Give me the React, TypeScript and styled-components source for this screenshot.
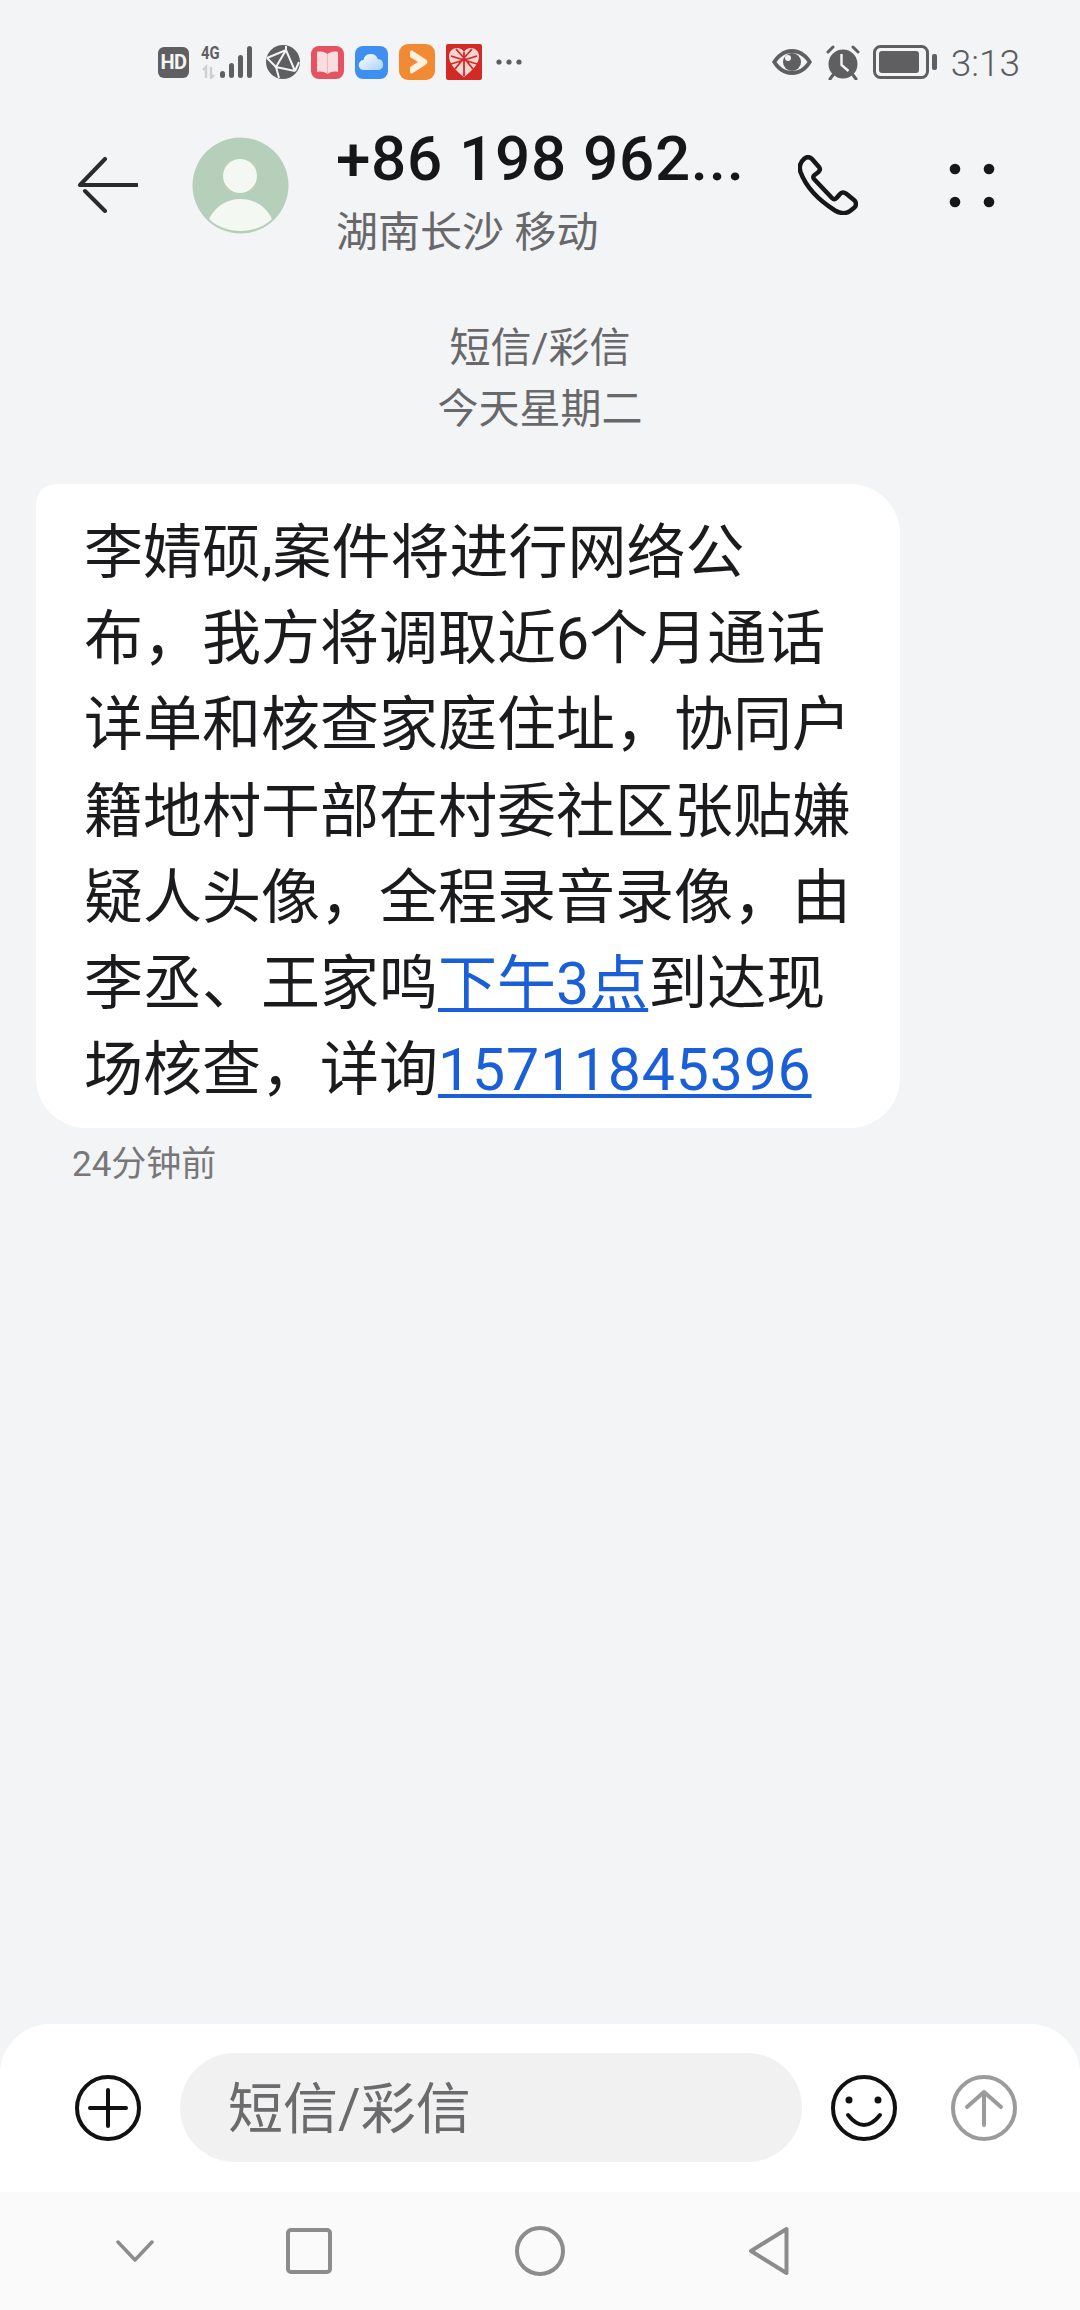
import React from "react";
import styled, { createGlobalStyle } from "styled-components";

const Global = createGlobalStyle`
  html, body { margin: 0; padding: 0; background: #f3f4f6; }
  * { box-sizing: border-box; }
`;

const FONT = `Roboto, "Noto Sans CJK SC", "Noto Sans", sans-serif`;

const Page = styled.div`
  width: 1080px;
  height: 2310px;
  display: flex;
  flex-direction: column;
  background: #f3f4f6;
  font-family: ${FONT};
  overflow: hidden;
`;

const StatusBar = styled.div`
  height: 100px;
  flex: none;
  display: flex;
  align-items: center;
  justify-content: space-between;
  padding: 24px 60px 0 158px;
  color: #5f5f62;
`;
const StatusGroup = styled.div<{ $gap: number }>`
  display: flex;
  align-items: center;
  gap: ${(p) => p.$gap}px;
`;
const HdBadge = styled.span`
  width: 31px;
  height: 31px;
  border-radius: 6px;
  background: #5f5f62;
  color: #f3f4f6;
  font-size: 20px;
  font-weight: 700;
  line-height: 31px;
  text-align: center;
  letter-spacing: -0.5px;
`;
const Signal = styled.div`
  position: relative;
  width: 55px;
  height: 34px;
`;
const NetLabel = styled.span`
  position: absolute;
  left: 1px;
  top: -2px;
  font-size: 19px;
  font-weight: 700;
  line-height: 20px;
  color: #5f5f62;
  transform: scaleX(0.78);
  transform-origin: left;
`;
const Dots = styled.svg`
  margin-left: 3px;
`;
const Clock = styled.span`
  font-size: 37px;
  font-weight: 300;
  line-height: 40px;
  color: #5c5c60;
  margin: 3px 0 0 3px;
`;

const Header = styled.header`
  height: 170px;
  flex: none;
  display: flex;
  align-items: center;
  padding: 0 0 0 78px;
`;
const Avatar = styled.svg`
  display: block;
  flex: none;
  margin-left: 54px;
`;
const TitleBlock = styled.div`
  margin-left: 47px;
  width: 462px;
  flex: none;
  display: flex;
  flex-direction: column;
  margin-top: 10px;
`;
const Name = styled.div`
  font-size: 62px;
  font-weight: 500;
  line-height: 72px;
  color: #17171a;
  letter-spacing: 0.7px;
  white-space: nowrap;
`;
const Region = styled.div`
  font-size: 42px;
  line-height: 50px;
  color: #68686b;
  white-space: nowrap;
  margin-top: 13px;
`;
const HeaderIcon = styled.svg<{ $ml?: number }>`
  display: block;
  flex: none;
  margin-left: ${(p) => p.$ml ?? 0}px;
`;

const Notice = styled.div`
  flex: none;
  display: flex;
  flex-direction: column;
  align-items: center;
  color: #68686b;
  font-size: 41px;
  line-height: 61px;
  margin-top: 48px;
`;

const Thread = styled.main`
  flex: 1;
  padding: 44px 0 0 36px;
`;
const Bubble = styled.div`
  width: 864px;
  background: #fff;
  border-radius: 20px 50px 50px 50px;
  padding: 26px 0 15px 48px;
  font-size: 59px;
  line-height: 86.2px;
  color: #1b1b1d;
`;
const Line = styled.span`
  display: block;
  white-space: nowrap;
`;
const Link = styled.span<{ $spaced?: boolean }>`
  color: #1a5fd8;
  text-decoration: underline;
  text-decoration-thickness: 4px;
  text-underline-offset: 4px;
  text-decoration-skip-ink: none;
  letter-spacing: ${(p) => (p.$spaced ? "0.8px" : "0")};
`;
const Stamp = styled.div`
  margin: 17px 0 0 36px;
  font-size: 35px;
  line-height: 40px;
  color: #77777a;
`;

const Composer = styled.div`
  height: 168px;
  flex: none;
  background: #fff;
  border-radius: 50px 50px 0 0;
  display: flex;
  align-items: flex-start;
  padding: 29px 0 0 75px;
`;
const RoundIcon = styled.svg<{ $ml?: number }>`
  display: block;
  flex: none;
  margin-top: 22px;
  margin-left: ${(p) => p.$ml ?? 0}px;
`;
const Input = styled.div`
  width: 622px;
  height: 109px;
  border-radius: 55px;
  background: #f1f1f2;
  margin: 0 29px 0 39px;
  padding-left: 48px;
  font-size: 55px;
  line-height: 112px;
  color: #6b6b6e;
  flex: none;
`;
const NavBar = styled.nav`
  height: 118px;
  flex: none;
  background: #fafafa;
  display: flex;
  align-items: center;
  gap: 183px;
  padding: 0 0 0 116px;
`;
const NavIcon = styled.svg<{ $mr?: number }>`
  display: block;
  flex: none;
  margin-right: ${(p) => p.$mr ?? 0}px;
`;

export default function App() {
  return (
    <Page>
      <Global />
      <StatusBar>
        <StatusGroup $gap={11}>
          <HdBadge>HD</HdBadge>
          <Signal>
            <NetLabel>4G</NetLabel>
            <svg width="55" height="34" viewBox="0 0 55 34">
              <path d="M3 25l3-3v11M11 22v11l3-3" stroke="#cfcfd2" strokeWidth="2.4" fill="none" />
              <g fill="#5f5f62">
                <rect x="20" y="26" width="5" height="7" rx="2.5" />
                <rect x="29" y="18" width="5" height="15" rx="2.5" />
                <rect x="38" y="10" width="5" height="23" rx="2.5" />
                <rect x="47" y="1" width="5" height="32" rx="2.5" />
              </g>
            </svg>
          </Signal>
          <svg width="34" height="34" viewBox="0 0 34 34">
            <circle cx="17" cy="17" r="17" fill="#5f5f62" />
            <path d="M1 13 L20 5 L29 26 M20 5 L10 22 L29 26 M10 22 L13 33 M1 13 L10 22 M20 1 L20 5 M29 26 L33 17" stroke="#f3f4f6" strokeWidth="2" fill="none" />
          </svg>
          <svg width="33" height="33" viewBox="0 0 33 33">
            <rect width="33" height="33" rx="8" fill="#e4535f" />
            <path d="M6 6c4-1 8 0 10.500 2C19 6 23 5 27 6v20c-4-1-8 0-10.500 2C14 26 10 25 6 26z" fill="#fbdde0" />
            <path d="M16.500 8v20" stroke="#f3b4ba" strokeWidth="1" />
          </svg>
          <svg width="33" height="33" viewBox="0 0 33 33">
            <defs>
              <linearGradient id="cl" x1="0" y1="0" x2="1" y2="1">
                <stop offset="0" stopColor="#ffffff" />
                <stop offset="1" stopColor="#a9d2f7" />
              </linearGradient>
            </defs>
            <rect width="33" height="33" rx="8" fill="#3f8ff0" />
            <path d="M9 24a5 5 0 0 1-.6-10 7.500 7.500 0 0 1 14.400-1 5.600 5.600 0 0 1 1.200 11z" fill="url(#cl)" />
          </svg>
          <svg width="36" height="36" viewBox="0 0 36 36">
            <rect width="36" height="36" rx="9" fill="#f28a33" />
            <path d="M11 8c0-1.500 1.500-2 2.500-1.300L27 15.500c2 1.300 2 3.700 0 5L13.500 29.300C12.500 30 11 29.500 11 28v-5l8-5-8-5z" fill="#fff0e0" />
          </svg>
          <svg width="36" height="36" viewBox="0 0 36 36">
            <rect width="36" height="36" rx="2" fill="#d22a24" />
            <path d="M18 33C10 27 3 20 3 12c0-5 4-8 8-8 3 0 5.500 1.500 7 4 1.500-2.500 4-4 7-4 4 0 8 3 8 8 0 8-7 15-15 21z" fill="#f6d5d2" />
            <path d="M18 8v24M5 12l26 8M31 12L5 20M10 5l8 9 8-9M9 25l9-11 9 11" stroke="#d22a24" strokeWidth="1.800" fill="none" />
          </svg>
          <Dots width="26" height="6" viewBox="0 0 26 6">
            <g fill="#5f5f62">
              <circle cx="3" cy="3" r="2.600" />
              <circle cx="13" cy="3" r="2.600" />
              <circle cx="23" cy="3" r="2.600" />
            </g>
          </Dots>
        </StatusGroup>
        <StatusGroup $gap={11}>
          <svg width="42" height="28" viewBox="0 0 42 28">
            <path d="M21 1C12 1 5 7 1 14c4 7 11 13 20 13s16-6 20-13C37 7 30 1 21 1z" fill="#5f5f62" />
            <path d="M21 5C14 5 9 9 5.500 14 9 19 14 23 21 23s12-4 15.500-9C33 9 28 5 21 5z" fill="#f3f4f6" />
            <circle cx="21" cy="14" r="9" fill="#5f5f62" />
            <circle cx="17" cy="10" r="3" fill="#f3f4f6" />
          </svg>
          <svg width="38" height="35" viewBox="0 0 38 35">
            <circle cx="19" cy="19" r="14.500" fill="#5f5f62" />
            <path d="M4 7l5-5M34 7l-5-5M9 30l-3 4M29 30l3 4" stroke="#5f5f62" strokeWidth="3" strokeLinecap="round" />
            <path d="M17.500 9v11l7 6" stroke="#f3f4f6" strokeWidth="2.400" fill="none" />
          </svg>
          <svg width="64" height="34" viewBox="0 0 64 34">
            <rect x="1.500" y="1.500" width="53" height="31" rx="6" fill="none" stroke="#5f5f62" strokeWidth="3" />
            <rect x="6" y="6" width="40" height="22" rx="3" fill="#5f5f62" />
            <rect x="59" y="9" width="5" height="16" rx="2" fill="#5f5f62" />
          </svg>
          <Clock>3:13</Clock>
        </StatusGroup>
      </StatusBar>

      <Header>
        <HeaderIcon width="60" height="56" viewBox="0 0 60 56">
          <path d="M27 2L2 28h57M7 34l20 20" stroke="#2b2b2e" strokeWidth="4" fill="none" strokeLinecap="round" strokeLinejoin="round" />
        </HeaderIcon>
        <Avatar width="97" height="97" viewBox="0 0 97 97">
          <circle cx="48.500" cy="48.500" r="48" fill="#b5cfbb" />
          <circle cx="48" cy="39" r="17" fill="#f3f8f2" />
          <path d="M17 82C24 68 36 62 48.500 62 61 62 73 68 80 82 72 90 60 94 48.500 94 37 94 25 90 17 82z" fill="#f3f8f2" />
        </Avatar>
        <TitleBlock>
          <Name>+86 198 962...</Name>
          <Region>湖南长沙 移动</Region>
        </TitleBlock>
        <HeaderIcon width="60" height="60" viewBox="0 0 60 60">
          <path d="M6 4C8 1.500 12 1.500 14 4L21 12C22.500 14 22 15.500 20.500 17L16.500 20C15 21 15 23 16 24L34 43C35.500 44.500 37 44.500 38.500 43L42 39C43.500 37 46 37 48 38.500L56 45C58.500 47 58.500 50.500 56.500 52.500L52 56C48 59 42 58.500 37 55.500 22 46 8 32 2.500 17 1 12 2.500 7 6 4z" stroke="#17171a" strokeWidth="4.500" fill="none" strokeLinejoin="round" />
        </HeaderIcon>
        <HeaderIcon $ml={91} width="46" height="45" viewBox="0 0 46 45">
          <g fill="#17171a">
            <circle cx="6" cy="6" r="5.300" />
            <circle cx="40" cy="6" r="5.300" />
            <circle cx="6" cy="39" r="5.300" />
            <circle cx="40" cy="39" r="5.300" />
          </g>
        </HeaderIcon>
      </Header>

      <Notice>
        <span>短信/彩信</span>
        <span>今天星期二</span>
      </Notice>

      <Thread>
        <Bubble>
          <Line>李婧硕,案件将进行网络公</Line>
          <Line>布，我方将调取近6个月通话</Line>
          <Line>详单和核查家庭住址，协同户</Line>
          <Line>籍地村干部在村委社区张贴嫌</Line>
          <Line>疑人头像，全程录音录像，由</Line>
          <Line>
            李丞、王家鸣<Link>下午3点</Link>到达现
          </Line>
          <Line>
            场核查，详询<Link $spaced>15711845396</Link>
          </Line>
        </Bubble>
        <Stamp>24分钟前</Stamp>
      </Thread>

      <Composer>
        <RoundIcon width="66" height="66" viewBox="0 0 66 66">
          <circle cx="33" cy="33" r="31" fill="none" stroke="#111" strokeWidth="4" />
          <path d="M15 33h36M33 15v36" stroke="#111" strokeWidth="4" strokeLinecap="round" />
        </RoundIcon>
        <Input>短信/彩信</Input>
        <RoundIcon width="66" height="66" viewBox="0 0 66 66">
          <circle cx="33" cy="33" r="31" fill="none" stroke="#111" strokeWidth="4" />
          <circle cx="18" cy="25" r="3.500" fill="#111" />
          <circle cx="47" cy="25" r="3.500" fill="#111" />
          <path d="M17 40Q33 60 49 40" fill="none" stroke="#111" strokeWidth="4" strokeLinecap="round" />
        </RoundIcon>
        <RoundIcon $ml={54} width="66" height="66" viewBox="0 0 66 66">
          <circle cx="33" cy="33" r="31" fill="none" stroke="#9b9b9b" strokeWidth="4" />
          <path d="M33 50V17M16 32l17-15 17 15" fill="none" stroke="#9b9b9b" strokeWidth="4" strokeLinecap="round" strokeLinejoin="round" />
        </RoundIcon>
      </Composer>

      <NavBar>
        <NavIcon $mr={-51} width="38" height="22" viewBox="0 0 38 22">
          <path d="M2 2l17 18L36 2" fill="none" stroke="#8c8c8e" strokeWidth="3.500" strokeLinecap="round" strokeLinejoin="round" />
        </NavIcon>
        <NavIcon width="46" height="46" viewBox="0 0 46 46">
          <rect x="2" y="2" width="42" height="42" rx="3" fill="none" stroke="#8c8c8e" strokeWidth="4" />
        </NavIcon>
        <NavIcon width="50" height="50" viewBox="0 0 50 50">
          <circle cx="25" cy="25" r="23" fill="none" stroke="#8c8c8e" strokeWidth="4" />
        </NavIcon>
        <NavIcon width="42" height="50" viewBox="0 0 42 50">
          <path d="M38.500 3L3 25l35.500 22z" fill="none" stroke="#8c8c8e" strokeWidth="4" strokeLinejoin="round" />
        </NavIcon>
      </NavBar>
    </Page>
  );
}
